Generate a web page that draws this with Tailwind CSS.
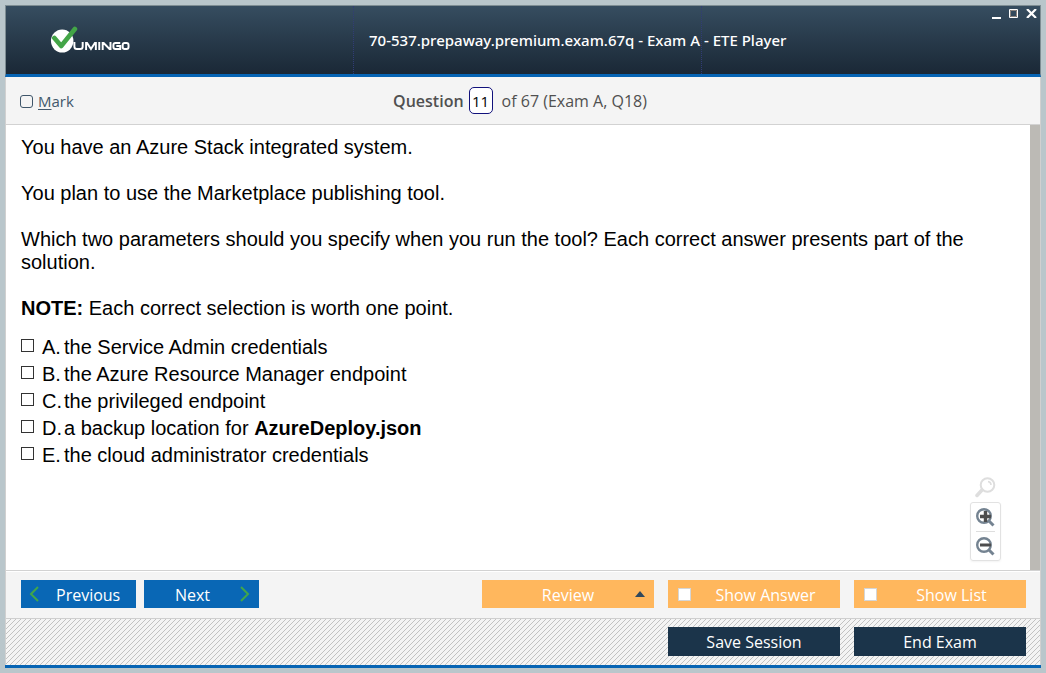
<!DOCTYPE html>
<html lang="en">
<head>
<meta charset="utf-8">
<meta name="viewport" content="width=device-width, initial-scale=1">
<title>70-537.prepaway.premium.exam.67q - Exam A - ETE Player</title>
<script src="https://cdn.jsdelivr.net/npm/@tailwindcss/browser@4"></script>
</head>
<body class="bg-[#b9c6cb]">
<div class="flex min-h-screen flex-col p-[5px] font-['Open_Sans','Noto_Sans',sans-serif]">
  <header class="grid h-[72px] shrink-0 grid-cols-[1fr_349px_338px] border-x border-t border-b-3 border-x-[#7e8d93] border-t-[#7e8d93] border-b-[#0664b4] bg-linear-to-b from-[#364d60] to-[#1a2836]">
    <div class="flex items-center pl-11">
      <svg class="h-7 w-20" viewBox="0 0 82 28" preserveAspectRatio="none" role="img" aria-label="Vumingo">
        <circle cx="12.500" cy="15" r="11.500" fill="#fff"/>
        <path d="M4.500 12 11.500 20 25.500 3" fill="none" stroke="#43a547" stroke-width="4.800" stroke-linecap="round" stroke-linejoin="round"/>
        <g fill="none" stroke="#fff" stroke-width="2">
          <path d="M25 16v4.500q0 2.500 2.500 2.500h3.500q2.500 0 2.500-2.500V16"/>
          <path d="M37 24v-7h1l4 6 4-6h1v7M50.500 16v8M54 24v-7h1l6 6h1v-7"/>
          <path d="M72 17h-5q-2 0-2 2v2q0 2 2 2h5v-3h-4M76.500 17h2q2 0 2 2v2q0 2-2 2h-2q-2 0-2-2v-2q0-2 2-2Z"/>
        </g>
      </svg>
    </div>
    <h1 class="flex items-center border-x border-dotted border-[#313c76] pl-[15px] font-['Noto_Sans','Open_Sans',sans-serif] text-[15px] font-medium whitespace-nowrap text-white">70-537.prepaway.premium.exam.67q - Exam A - ETE Player</h1>
    <div class="flex items-start justify-end gap-2 pt-[3px] pr-[3px] text-white">
      <button type="button" aria-label="Minimize"><svg class="h-[11px] w-[9px]" viewBox="0 0 9 11"><path d="M0 8h9v2H0z" fill="#fff"/></svg></button>
      <button type="button" aria-label="Maximize"><svg class="h-[9px] w-[9px]" viewBox="0 0 9 9"><path d="M.5.5h8v8h-8z" fill="none" stroke="#fff"/><path d="M1.500 1.500h6v6h-6z" fill="none" stroke="#8c837d"/></svg></button>
      <button type="button" aria-label="Close"><svg class="h-[9px] w-[11px]" viewBox="0 0 11 9"><path d="m1 0 9 9M10 0 1 9" stroke="#fff" stroke-width="2.200"/></svg></button>
    </div>
  </header>

  <main class="flex min-h-0 flex-1 flex-col border-x border-[#d0d0d0] bg-[#f4f4f4]">
    <div class="grid h-12 shrink-0 grid-cols-[1fr_auto_1fr] items-center border-b border-[#d2d2d2] pr-5 pl-[14px] text-[#505050]">
      <label class="flex items-center gap-[5px] pt-[2px] text-[15px]">
        <input type="checkbox" class="size-[13px] appearance-none rounded-[3px] border border-[#3f566a] bg-[#f4f4f4] checked:bg-[#3f566a]">
        <span class="text-[#42586b]"><u class="underline-offset-2">M</u>ark</span>
      </label>
      <div class="flex items-center text-base">
        <label for="qn" class="font-semibold">Question</label>
        <input id="qn" type="text" value="11" class="mx-[5px] h-[27px] w-6 rounded-[5px] border border-[#12127c] bg-white text-center text-[15px] text-black">
        <span class="pl-1">of 67 (Exam A, Q18)</span>
      </div>
    </div>

    <section class="relative flex min-h-0 flex-1 border-b border-[#d2d2d2] bg-white">
      <div class="flex-1 pt-[11px] pr-[60px] pl-[15px] font-['Liberation_Sans',Arial,sans-serif] text-[20px] leading-[23px] text-black">
        <p class="mb-[23px]">You have an Azure Stack integrated system.</p>
        <p class="mb-[23px]">You plan to use the Marketplace publishing tool.</p>
        <p class="mb-[23px]">Which two parameters should you specify when you run the tool? Each correct answer presents part of the solution.</p>
        <p class="mb-[14px]"><b>NOTE:</b> Each correct selection is worth one point.</p>
        <ul class="leading-[27px]">
          <li><label class="grid grid-cols-[21px_22px_auto] justify-start"><input type="checkbox" class="mt-[5px] size-[13px] appearance-none border border-[#333] checked:bg-[#333]"><span>A.</span><span>the Service Admin credentials</span></label></li>
          <li><label class="grid grid-cols-[21px_22px_auto] justify-start"><input type="checkbox" class="mt-[5px] size-[13px] appearance-none border border-[#333] checked:bg-[#333]"><span>B.</span><span>the Azure Resource Manager endpoint</span></label></li>
          <li><label class="grid grid-cols-[21px_22px_auto] justify-start"><input type="checkbox" class="mt-[5px] size-[13px] appearance-none border border-[#333] checked:bg-[#333]"><span>C.</span><span>the privileged endpoint</span></label></li>
          <li><label class="grid grid-cols-[21px_22px_auto] justify-start"><input type="checkbox" class="mt-[5px] size-[13px] appearance-none border border-[#333] checked:bg-[#333]"><span>D.</span><span>a backup location for <b>AzureDeploy.json</b></span></label></li>
          <li><label class="grid grid-cols-[21px_22px_auto] justify-start"><input type="checkbox" class="mt-[5px] size-[13px] appearance-none border border-[#333] checked:bg-[#333]"><span>E.</span><span>the cloud administrator credentials</span></label></li>
        </ul>
      </div>
      <div class="w-[10px] shrink-0 bg-[#bcbab5]"></div>
      <div class="absolute right-[39px] bottom-[9px] flex flex-col items-center gap-1">
        <button type="button" aria-label="Reset zoom"><svg class="size-[21px]" viewBox="0 0 21 21" fill="none" stroke="#dedede"><circle cx="12.500" cy="8" r="6.800" stroke-width="2"/><path d="m7 13-5 5.500" stroke-width="3.500" stroke-linecap="round"/><path d="M13 4.500q3 .5 3 3.500" stroke-width="1.500"/></svg></button>
        <div class="flex w-[31px] flex-col items-center rounded-[3px] border border-[#e2e2e2] shadow-xs">
          <button type="button" aria-label="Zoom in" class="flex h-7 items-center pt-px"><svg class="size-[19px]" viewBox="0 0 19 19" fill="none"><circle cx="8" cy="8" r="6.800" stroke="#748391" stroke-width="2.400"/><path d="m13 13 4.500 4.500" stroke="#748391" stroke-width="3"/><path d="M9.500 3v11M4 8.500h11" stroke="#4d4d4d" stroke-width="3.400"/></svg></button>
          <div class="h-px w-[19px] bg-[#dedede]"></div>
          <button type="button" aria-label="Zoom out" class="flex h-7 items-center pt-px"><svg class="size-[19px]" viewBox="0 0 19 19" fill="none"><circle cx="8" cy="8" r="6.800" stroke="#748391" stroke-width="2.400"/><path d="m13 13 4.500 4.500" stroke="#748391" stroke-width="3"/><path d="M4 8h11" stroke="#4d4d4d" stroke-width="3"/></svg></button>
        </div>
      </div>
    </section>

    <div class="flex h-12 shrink-0 items-center border-t border-b border-t-white border-b-[#cfcfcf] px-[14px] pb-[2px] text-base text-white">
      <div class="flex gap-2 pl-px">
        <button type="button" class="flex h-7 w-[115px] items-center bg-[#0967b5] pl-2"><svg class="h-4 w-[10px]" viewBox="0 0 10 16" fill="none" stroke="#41a64b" stroke-width="2"><path d="M9 1 2 8l7 7"/></svg><span class="pt-[2px] pl-[17px]">Previous</span></button>
        <button type="button" class="flex h-7 w-[115px] items-center justify-end bg-[#0967b5] pr-[9px]"><span class="pt-[2px] pr-[30px]">Next</span><svg class="h-4 w-[10px]" viewBox="0 0 10 16" fill="none" stroke="#41a64b" stroke-width="2"><path d="m1 1 7 7-7 7"/></svg></button>
      </div>
      <div class="ml-auto flex gap-[14px]">
        <button type="button" class="grid h-7 w-[172px] grid-cols-[1fr_auto_1fr] items-center bg-[#ffb75d] px-[9px]"><span></span><span class="pt-[2px]">Review</span><svg class="h-[6px] w-[10px] justify-self-end" viewBox="0 0 10 6"><path d="M5 0 10 6H0z" fill="#30485c"/></svg></button>
        <label class="flex h-7 w-[172px] items-center bg-[#ffb75d] pl-[10px]"><input type="checkbox" class="size-[13px] appearance-none border border-[#d5d5d5] bg-white checked:bg-[#30485c]"><span class="flex-1 pt-[2px] text-center">Show Answer</span></label>
        <label class="flex h-7 w-[172px] items-center bg-[#ffb75d] pl-[10px]"><input type="checkbox" class="size-[13px] appearance-none border border-[#d5d5d5] bg-white checked:bg-[#30485c]"><span class="flex-1 pt-[2px] text-center">Show List</span></label>
      </div>
    </div>

    <footer class="relative flex h-[46px] shrink-0 items-center justify-end gap-[14px] px-[14px] pb-[2px] text-base text-white">
      <svg class="absolute inset-0 size-full" aria-hidden="true" shape-rendering="crispEdges"><defs><pattern id="hatch" width="5" height="5" patternUnits="userSpaceOnUse"><path d="M4 0h1v1H4zM3 1h1v1H3zM2 2h1v1H2zM1 3h1v1H1zM0 4h1v1H0z" fill="#c2c2c2"/></pattern></defs><rect width="100%" height="100%" fill="url(#hatch)"/></svg>
      <button type="button" class="relative h-[29px] w-[172px] bg-[#1b344a] pt-px">Save Session</button>
      <button type="button" class="relative h-[29px] w-[172px] bg-[#1b344a] pt-px">End Exam</button>
    </footer>
  </main>
  <div class="h-[3px] shrink-0 bg-[#0664b4]"></div>
</div>
</body>
</html>
